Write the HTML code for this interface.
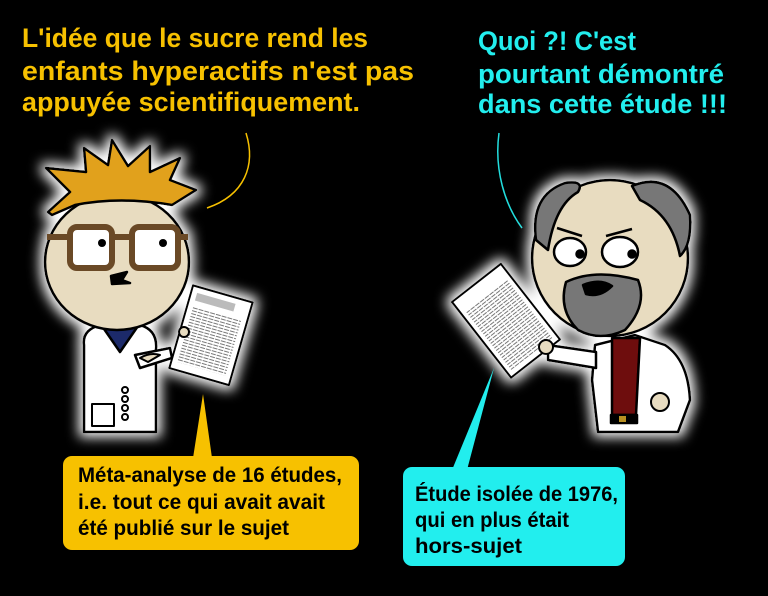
<!DOCTYPE html>
<html><head><meta charset="utf-8"><style>
html,body{margin:0;padding:0;background:#000;width:768px;height:596px;overflow:hidden}
svg{display:block}
text{font-family:"Liberation Sans Narrow","Liberation Sans",sans-serif;font-weight:bold}
</style></head><body>
<svg width="768" height="596" viewBox="0 0 768 596" xmlns="http://www.w3.org/2000/svg">
<defs>
<filter id="glow" x="-30%" y="-30%" width="160%" height="160%">
<feMorphology in="SourceAlpha" operator="dilate" radius="4" result="d"/>
<feGaussianBlur in="d" stdDeviation="6" result="b"/>
<feFlood flood-color="#fff" flood-opacity="1"/>
<feComposite in2="b" operator="in" result="g"/>
<feMerge><feMergeNode in="g"/><feMergeNode in="SourceGraphic"/></feMerge>
</filter>
<pattern id="txt" width="6" height="3" patternUnits="userSpaceOnUse">
<rect width="6" height="3" fill="#fff"/><rect y="1" width="5" height="1" fill="#777"/>
</pattern>
</defs>
<rect width="768" height="596" fill="#000"/>

<g fill="#f7c100" font-size="27">
<text x="22" y="47" textLength="346" lengthAdjust="spacingAndGlyphs">L'idée que le sucre rend les</text>
<text x="22" y="80" textLength="392" lengthAdjust="spacingAndGlyphs">enfants hyperactifs n'est pas</text>
<text x="22" y="111" textLength="338" lengthAdjust="spacingAndGlyphs">appuyée scientifiquement.</text>
</g>
<g fill="#22eeee" font-size="27">
<text x="478" y="50" textLength="158" lengthAdjust="spacingAndGlyphs">Quoi ?! C'est</text>
<text x="478" y="83" textLength="246" lengthAdjust="spacingAndGlyphs">pourtant démontré</text>
<text x="478" y="113" textLength="249" lengthAdjust="spacingAndGlyphs">dans cette étude !!!</text>
</g>
<path d="M246 133 C256 165 245 195 207 208" stroke="#f7c100" stroke-width="1.5" fill="none"/>
<path d="M499 133 C494 170 505 205 522 228" stroke="#22dddd" stroke-width="1.5" fill="none"/>

<!-- LEFT CHARACTER -->
<g filter="url(#glow)" stroke="#000" stroke-width="2.5" stroke-linejoin="round">
 <path d="M84 345 Q82 330 100 325 L140 325 Q158 330 156 350 L156 432 L84 432 Z" fill="#fff"/>
 <path d="M102 326 L120 352 L138 326 Z" fill="#1a2a6a"/>
 <rect x="92" y="404" width="22" height="22" fill="#fff" stroke-width="2"/>
 <g fill="#fff" stroke-width="2"><circle cx="125" cy="390" r="3"/><circle cx="125" cy="399" r="3"/><circle cx="125" cy="408" r="3"/><circle cx="125" cy="417" r="3"/></g>
 <path d="M135 355 L170 348 L172 358 L140 368 Z" fill="#fff"/>
 <g transform="rotate(16 210 335)">
  <rect x="180" y="292" width="62" height="86" fill="#fff" stroke-width="2"/>
  <rect x="186" y="312" width="50" height="58" fill="url(#txt)" stroke="none"/>
  <rect x="186" y="298" width="40" height="8" fill="#bbb" stroke="none"/>
 </g>
 <circle cx="184" cy="332" r="5" fill="#e8dcc0" stroke-width="2"/>
 <path d="M140 358 Q150 352 160 355 L148 362 Z" fill="#e8dcc0" stroke-width="2"/>
 <!-- head -->
 <ellipse cx="117" cy="262" rx="72" ry="68" fill="#e8dcc0"/>
 <!-- hair -->
 <path d="M48 212 L70 192 L46 168 L86 172 L84 148 L108 165 L112 140 L128 166 L150 146 L150 172 L180 158 L170 180 L196 190 L172 205 Q120 196 75 205 L52 215 Z" fill="#e1a11a"/>
 <g fill="none" stroke="#6b4a25" stroke-width="6">
  <line x1="47" y1="237" x2="188" y2="237"/>
  <rect x="70" y="227" width="42" height="41" rx="7" fill="#fff"/>
  <rect x="132" y="227" width="46" height="41" rx="7" fill="#fff"/>
 </g>
 <circle cx="102" cy="243" r="4" fill="#000" stroke="none"/>
 <circle cx="163" cy="243" r="4" fill="#000" stroke="none"/>
 <path d="M111 276 L127 272 L122 280 L130 283 L112 284 Z" fill="#000"/>
</g>

<!-- RIGHT CHARACTER -->
<g filter="url(#glow)" stroke="#000" stroke-width="2.5" stroke-linejoin="round">
 <path d="M595 345 L635 335 L665 345 Q688 360 690 400 L678 432 L598 432 L592 380 Z" fill="#fff"/>
 <path d="M612 338 L640 338 L636 415 L612 415 Z" fill="#6e0808"/>
 <rect x="611" y="415" width="26" height="8" fill="#000"/>
 <rect x="619" y="416" width="7" height="6" fill="#b89020" stroke="none"/>
 <circle cx="660" cy="402" r="9" fill="#e8dcc0" stroke-width="2"/>
 <path d="M548 345 L596 352 L596 368 L548 360 Z" fill="#fff"/>
 <g transform="rotate(-38 452 302)">
  <rect x="452" y="302" width="62" height="96" fill="#fff" stroke-width="2"/>
  <rect x="457" y="318" width="52" height="74" fill="url(#txt)" stroke="none"/>
 </g>
 <circle cx="546" cy="347" r="7" fill="#e8dcc0" stroke-width="2"/>
 <circle cx="610" cy="258" r="78" fill="#e8dcc0"/>
 <path d="M536 240 Q530 195 565 183 Q585 180 578 192 Q555 205 548 250 Z" fill="#777"/>
 <path d="M632 186 Q670 170 690 215 Q692 245 680 256 Q672 215 640 200 Z" fill="#777"/>
 <path d="M566 282 Q595 268 638 280 Q648 305 625 330 Q600 342 578 330 Q558 310 566 282 Z" fill="#777"/>
 <path d="M583 285 Q600 278 612 286 Q600 298 586 294 Z" fill="#000"/>
 <ellipse cx="570" cy="252" rx="16" ry="14" fill="#fff"/>
 <ellipse cx="620" cy="252" rx="18" ry="15" fill="#fff"/>
 <circle cx="580" cy="254" r="3.5" fill="#000"/>
 <circle cx="632" cy="254" r="3.5" fill="#000"/>
 <path d="M557 228 L582 236 M606 236 L632 229" fill="none"/>
</g>

<path d="M193 458 L203 394 L212 458 Z" fill="#f7c100"/>
<rect x="63" y="456" width="296" height="94" rx="9" fill="#f7c100"/>
<g fill="#000" font-size="21">
<text x="78" y="482" textLength="264" lengthAdjust="spacingAndGlyphs">Méta-analyse de 16 études,</text>
<text x="78" y="509" textLength="247" lengthAdjust="spacingAndGlyphs">i.e. tout ce qui avait avait</text>
<text x="78" y="535" textLength="211" lengthAdjust="spacingAndGlyphs">été publié sur le sujet</text>
</g>
<path d="M452 470 L494 368 L467 470 Z" fill="#22eeee"/>
<rect x="403" y="467" width="222" height="99" rx="9" fill="#22eeee"/>
<g fill="#000" font-size="21">
<text x="415" y="501" textLength="203" lengthAdjust="spacingAndGlyphs">Étude isolée de 1976,</text>
<text x="415" y="527" textLength="154" lengthAdjust="spacingAndGlyphs">qui en plus était</text>
<text x="415" y="553" textLength="107" lengthAdjust="spacingAndGlyphs">hors-sujet</text>
</g>
</svg>
</body></html>
